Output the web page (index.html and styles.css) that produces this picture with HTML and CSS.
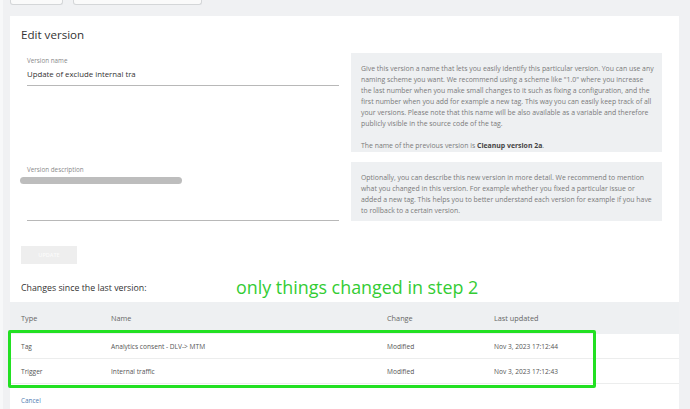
FILE: index.html
```html
<!DOCTYPE html>
<html>
<head>
<meta charset="utf-8">
<link rel="stylesheet" href="styles.css">
</head>
<body>
<div class="page">
  <div class="topbar">
    <span class="tbtn tbtn-a"></span>
    <span class="tbtn tbtn-b"></span>
  </div>
  <div class="card">
    <h1 class="title">Edit version</h1>
    <div class="row">
      <div class="field">
        <div class="label">Version name</div>
        <div class="input">Update of exclude internal tra</div>
      </div>
      <div class="help">
        Give this version a name that lets you easily identify this particular version. You can use any<br>
        naming scheme you want. We recommend using a scheme like "1.0" where you increase<br>
        the last number when you make small changes to it such as fixing a configuration, and the<br>
        first number when you add for example a new tag. This way you can easily keep track of all<br>
        your versions. Please note that this name will be also available as a variable and therefore<br>
        publicly visible in the source code of the tag.
        <p class="prev">The name of the previous version is <b>Cleanup version 2a</b>.</p>
      </div>
    </div>
    <div class="row row-desc">
      <div class="field field-desc">
        <div class="label">Version description</div>
        <div class="textarea"><span class="redact"></span></div>
      </div>
      <div class="help help-desc">
        Optionally, you can describe this new version in more detail. We recommend to mention<br>
        what you changed in this version. For example whether you fixed a particular issue or<br>
        added a new tag. This helps you to better understand each version for example if you have<br>
        to rollback to a certain version.
      </div>
    </div>
    <button class="update">UPDATE</button>
    <div class="changes-head">
      <h2 class="subtitle">Changes since the last version:</h2>
      <span class="annot">only things changed in step 2</span>
    </div>
    <div class="table-wrap">
      <table class="changes">
        <thead>
          <tr><th class="c-type">Type</th><th class="c-name">Name</th><th class="c-change">Change</th><th>Last updated</th></tr>
        </thead>
        <tbody>
          <tr><td>Tag</td><td>Analytics consent - DLV-&gt; MTM</td><td>Modified</td><td>Nov 3, 2023 17:12:44</td></tr>
          <tr><td>Trigger</td><td>Internal traffic</td><td>Modified</td><td>Nov 3, 2023 17:12:43</td></tr>
        </tbody>
      </table>
      <div class="highlight"></div>
    </div>
    <a class="cancel" href="#">Cancel</a>
  </div>
</div>
</body>
</html>
```
FILE: styles.css
```css
html, body {
  margin: 0;
  padding: 0;
  background: #f0f1f3;
  font-family: "Open Sans", "Noto Sans", sans-serif;
  overflow: hidden;
}
.page {
  width: 690px;
  height: 409px;
  padding: 0 11px 0 10px;
  box-sizing: border-box;
  border-left: 3px solid #f7f8f9;
  position: relative;
}
.topbar {
  height: 16px;
  display: flex;
  gap: 10px;
  align-items: flex-start;
}
.tbtn {
  display: block;
  height: 5px;
  background: #fafafa;
  border: 1px solid #d4d6d8;
  border-top: none;
  border-radius: 0 0 3px 3px;
  box-sizing: border-box;
}
.tbtn-a { width: 53px; margin-left: -3px; }
.tbtn-b { width: 129px; }
.card {
  background: #fff;
  margin-left: -3px;
  padding: 10px 11px 0 11px;
  height: 400px;
  box-sizing: border-box;
}
.title {
  margin: 0;
  font-size: 11.6px;
  font-weight: 400;
  color: #333;
  line-height: 18px;
}
.row {
  display: grid;
  grid-template-columns: 318px 311px;
  column-gap: 12px;
  margin-top: 9px;
  align-items: start;
}
.row-desc {
  margin-top: 10px;
  align-items: stretch;
}
.field {
  padding-left: 6px;
  padding-top: 3px;
}
.label {
  font-size: 6.3px;
  color: #8a8a8a;
  line-height: 9px;
}
.input {
  font-size: 7.8px;
  color: #333;
  line-height: 12px;
  margin-top: 3px;
  padding-bottom: 5px;
  border-bottom: 1px solid #b8b8b8;
}
.field-desc {
  display: flex;
  flex-direction: column;
}
.textarea {
  flex: 1;
  border-bottom: 1px solid #b8b8b8;
  padding-top: 3px;
}
.redact {
  display: block;
  width: 162px;
  height: 7px;
  margin-left: -7px;
  border-radius: 4px;
  background: #bdbdbd;
}
.help {
  background: #eef0f2;
  color: #7a7a7a;
  font-size: 6.9px;
  line-height: 11px;
  padding: 10px 4px 1px 10px;
  white-space: nowrap;
}
.help .prev {
  margin: 11px 0 0 0;
}
.help .prev b {
  color: #444;
  font-weight: 700;
}
.help-desc {
  padding-top: 10px;
  padding-bottom: 5px;
}
.update {
  display: block;
  margin-top: 25px;
  width: 56px;
  height: 18px;
  background: #eeeeee;
  border: none;
  color: #fbfbfb;
  font-family: "Open Sans", sans-serif;
  font-size: 5.5px;
  font-weight: 600;
  padding: 0;
}
.changes-head {
  position: relative;
  margin-top: 17px;
  height: 21px;
}
.subtitle {
  margin: 0;
  font-size: 8.8px;
  font-weight: 400;
  color: #333;
  line-height: 14px;
}
.annot {
  position: absolute;
  left: 215px;
  top: -6px;
  font-size: 17.9px;
  color: #33cc33;
  white-space: nowrap;
  line-height: 24px;
}
.table-wrap {
  position: relative;
  margin: 0 -11px;
}
.changes {
  width: 100%;
  border-collapse: collapse;
  font-size: 6.6px;
  color: #555;
}
.changes th {
  background: #eef0f2;
  text-align: left;
  font-weight: 400;
  font-size: 7.3px;
  color: #666;
  height: 32px;
  padding: 0 0 0 11px;
}
.changes td {
  height: 24px;
  padding: 0 0 0 11px;
  border-bottom: 1px solid #eceded;
}
.c-type { width: 79px; }
.c-name { width: 265px; }
.c-change { width: 96px; }
.highlight {
  position: absolute;
  left: -2px;
  top: 28px;
  width: 588px;
  height: 58px;
  border: 3px solid #22e022;
  border-radius: 2px;
  box-sizing: border-box;
}
.cancel {
  display: inline-block;
  margin-top: 12px;
  font-size: 6.4px;
  color: #4f7db3;
  text-decoration: none;
}
```
